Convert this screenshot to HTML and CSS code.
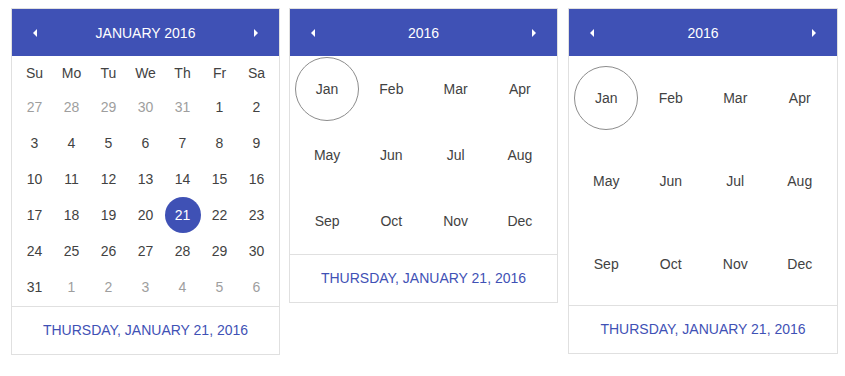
FILE: index.html
```html
<!DOCTYPE html>
<html lang="en">
<head>
  <meta charset="UTF-8" />
  <meta name="viewport" content="width=device-width, initial-scale=1.0"/>
  <title>Date pickers</title>
  <link rel="stylesheet" href="styles.css">
</head>
<body>
  <div class="pickers">

    <!-- day view -->
    <div class="picker">
      <div class="picker-head">
        <span class="nav"><span class="arrow-left"></span></span>
        <span class="title">JANUARY 2016</span>
        <span class="nav"><span class="arrow-right"></span></span>
      </div>
      <div class="days">
        <div class="weekdays">
          <span>Su</span><span>Mo</span><span>Tu</span><span>We</span><span>Th</span><span>Fr</span><span>Sa</span>
        </div>
        <div class="day-grid">
          <span class="day muted">27</span><span class="day muted">28</span><span class="day muted">29</span><span class="day muted">30</span><span class="day muted">31</span><span class="day">1</span><span class="day">2</span>
          <span class="day">3</span><span class="day">4</span><span class="day">5</span><span class="day">6</span><span class="day">7</span><span class="day">8</span><span class="day">9</span>
          <span class="day">10</span><span class="day">11</span><span class="day">12</span><span class="day">13</span><span class="day">14</span><span class="day">15</span><span class="day">16</span>
          <span class="day">17</span><span class="day">18</span><span class="day">19</span><span class="day">20</span><span class="day selected">21</span><span class="day">22</span><span class="day">23</span>
          <span class="day">24</span><span class="day">25</span><span class="day">26</span><span class="day">27</span><span class="day">28</span><span class="day">29</span><span class="day">30</span>
          <span class="day">31</span><span class="day muted">1</span><span class="day muted">2</span><span class="day muted">3</span><span class="day muted">4</span><span class="day muted">5</span><span class="day muted">6</span>
        </div>
      </div>
      <div class="picker-foot">THURSDAY, JANUARY 21, 2016</div>
    </div>

    <!-- month view -->
    <div class="picker">
      <div class="picker-head">
        <span class="nav"><span class="arrow-left"></span></span>
        <span class="title">2016</span>
        <span class="nav"><span class="arrow-right"></span></span>
      </div>
      <div class="months">
        <span class="month current">Jan</span><span class="month">Feb</span><span class="month">Mar</span><span class="month">Apr</span>
        <span class="month">May</span><span class="month">Jun</span><span class="month">Jul</span><span class="month">Aug</span>
        <span class="month">Sep</span><span class="month">Oct</span><span class="month">Nov</span><span class="month">Dec</span>
      </div>
      <div class="picker-foot">THURSDAY, JANUARY 21, 2016</div>
    </div>

    <!-- month view, tall -->
    <div class="picker picker-wide">
      <div class="picker-head">
        <span class="nav"><span class="arrow-left"></span></span>
        <span class="title">2016</span>
        <span class="nav"><span class="arrow-right"></span></span>
      </div>
      <div class="months months-tall">
        <span class="month current">Jan</span><span class="month">Feb</span><span class="month">Mar</span><span class="month">Apr</span>
        <span class="month">May</span><span class="month">Jun</span><span class="month">Jul</span><span class="month">Aug</span>
        <span class="month">Sep</span><span class="month">Oct</span><span class="month">Nov</span><span class="month">Dec</span>
      </div>
      <div class="picker-foot">THURSDAY, JANUARY 21, 2016</div>
    </div>

  </div>
</body>
</html>
```

FILE: styles.css
```css
body {
  margin: 0;
  padding: 0;
  font-family: "Liberation Sans", Arial, sans-serif;
  font-size: 14px;
  color: #424242;
  background: #fff;
}

.pickers {
  display: flex;
  align-items: flex-start;
  gap: 9px;
  padding: 8px 0 0 11px;
}

.picker {
  width: 267px;
  border: 1px solid #e0e0e0;
  background: #fff;
}

.picker-wide {
  width: 268px;
  margin-left: 1px;
}

.picker-head {
  display: flex;
  align-items: center;
  height: 47px;
  background: #3f51b5;
  color: #fff;
}

.picker-head .title {
  flex: 1;
  text-align: center;
}

.nav {
  width: 46px;
  display: flex;
  justify-content: center;
  align-items: center;
}

.arrow-left, .arrow-right {
  width: 0;
  height: 0;
  border-top: 4px solid transparent;
  border-bottom: 4px solid transparent;
}

.arrow-left {
  border-right: 4px solid #fff;
}

.arrow-right {
  border-left: 4px solid #fff;
}

.days {
  padding: 0 4px 1px;
}

.weekdays {
  display: grid;
  grid-template-columns: repeat(7, 1fr);
  height: 33px;
  align-items: center;
  text-align: center;
}

.day-grid {
  display: grid;
  grid-template-columns: repeat(7, 1fr);
  grid-auto-rows: 36px;
}

.day {
  display: flex;
  justify-content: center;
  align-items: center;
}

.day.muted {
  color: #9e9e9e;
}

.day.selected {
  width: 36px;
  height: 36px;
  justify-self: center;
  border-radius: 50%;
  background: #3f51b5;
  color: #fff;
}

.months {
  display: grid;
  grid-template-columns: repeat(4, 1fr);
  grid-auto-rows: 66px;
  padding: 0 5px;
}

.months-tall {
  height: 249px;
  grid-template-rows: repeat(3, 1fr);
}

.month {
  display: flex;
  justify-content: center;
  align-items: center;
}

.month.current {
  width: 62px;
  height: 62px;
  justify-self: center;
  align-self: center;
  border: 1px solid #8c8c8c;
  border-radius: 50%;
}

.picker-foot {
  height: 47px;
  line-height: 47px;
  border-top: 1px solid #e0e0e0;
  text-align: center;
  color: #3f51b5;
}
```
